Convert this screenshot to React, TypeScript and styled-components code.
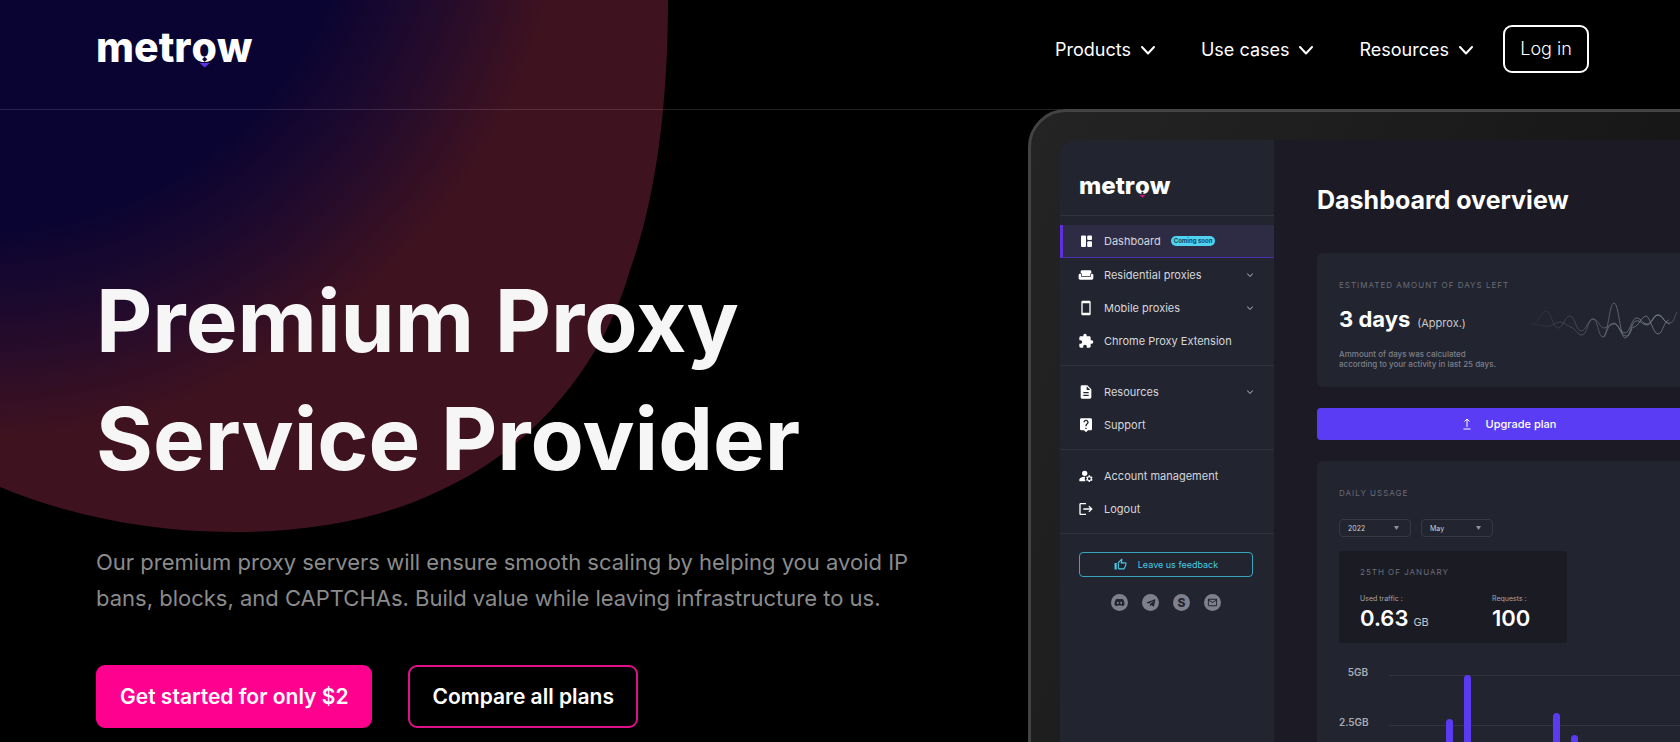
import React from "react";
import styled, { createGlobalStyle } from "styled-components";
import {
  MdWeekend,
  MdSmartphone,
  MdExtension,
  MdDescription,
  MdLiveHelp,
  MdManageAccounts,
  MdLogout,
  MdOutlineThumbUp,
  MdMailOutline,
} from "react-icons/md";
import { FaDiscord, FaTelegramPlane } from "react-icons/fa";

const GlobalStyle = createGlobalStyle`
  *, *::before, *::after { box-sizing: border-box; }
  body {
    margin: 0;
    background: #000;
    color: #fff;
    font-family: Inter, "Liberation Sans", sans-serif;
  }
  button, select { font-family: inherit; color: inherit; margin: 0; cursor: pointer; }
  a { color: inherit; text-decoration: none; }
  h1, h2, p, ul { margin: 0; padding: 0; }
  ul { list-style: none; }
`;

const Page = styled.div`
  position: relative;
  display: flex;
  flex-direction: column;
  height: 100vh;
  min-height: 740px;
  overflow: hidden;
`;

const Backdrop = styled.svg`
  position: absolute;
  top: 0;
  left: 0;
`;

const Header = styled.header`
  position: relative;
  display: flex;
  align-items: center;
  justify-content: space-between;
  height: 110px;
  padding: 0 91px 12px 96px;
  border-bottom: 1px solid rgba(255, 255, 255, 0.13);
`;

const Nav = styled.nav`
  display: flex;
  align-items: center;
  gap: 46px;
`;

const NavButton = styled.button`
  display: flex;
  align-items: center;
  gap: 10px;
  padding: 2px 0 0;
  border: 0;
  background: none;
  font-size: 18px;
  line-height: 24px;
`;

const LoginButton = styled.a`
  display: flex;
  align-items: center;
  justify-content: center;
  width: 86px;
  height: 48px;
  margin-left: -16px;
  border: 2px solid #fff;
  border-radius: 9px;
  font-size: 18px;
  font-weight: 300;
`;

const LogoText = styled.a<{ $size: number }>`
  display: inline-flex;
  padding-bottom: 3px;
  font-size: ${(p) => p.$size}px;
  line-height: 1;
  font-weight: 800;
`;

const LogoPin = styled.span`
  position: relative;

  svg {
    position: absolute;
    left: 0;
    bottom: 0;
    width: 100%;
    height: 100%;
    overflow: visible;
  }
`;

const Hero = styled.main`
  position: relative;
  flex: 1;
  display: grid;
  grid-template-columns: minmax(0, 1028fr) minmax(0, 652fr);
  min-height: 0;
`;

const Copy = styled.section`
  padding: 152px 0 0 96px;
`;

const Title = styled.h1`
  font-size: 87px;
  line-height: 118px;
  font-weight: 700;
  color: #f6f6f6;
`;

const Lead = styled.p`
  margin-top: 46px;
  font-size: 22px;
  line-height: 36px;
  color: #8b8b8b;
`;

const Actions = styled.div`
  display: flex;
  gap: 36px;
  margin-top: 49px;
`;

const ActionLink = styled.a<{ $filled?: boolean }>`
  display: flex;
  align-items: center;
  height: 63px;
  padding: 0 22px;
  border: 2px solid ${(p) => (p.$filled ? "#ff008f" : "#e0108a")};
  border-radius: 9px;
  background: ${(p) => (p.$filled ? "#ff008f" : "transparent")};
  font-size: 21px;
  font-weight: 600;
`;

const Device = styled.section`
  display: flex;
  width: 740px;
  height: 900px;
  margin-top: -1px;
  padding: 28px 28px 0 29px;
  border: 3px solid #434343;
  border-radius: 38px;
  background: linear-gradient(115deg, #242424, #161616 60%);
`;

const Sidebar = styled.aside`
  flex: 0 0 214px;
  border-top-left-radius: 14px;
  background: #22242f;
`;

const SideBrand = styled.div`
  display: flex;
  align-items: center;
  height: 75px;
  padding: 20px 0 0 19px;
`;

const MenuGroup = styled.ul`
  padding: 9px 0 8px;
  border-top: 1px solid #2f323d;
`;

const MenuLink = styled.a<{ $active?: boolean }>`
  display: flex;
  align-items: center;
  height: 33px;
  padding: 0 21px 0 ${(p) => (p.$active ? 15 : 18)}px;
  border-left: ${(p) => (p.$active ? "3px solid #5f2fe0" : "0")};
  border-bottom: ${(p) => (p.$active ? "1px solid #4a30b0" : "0")};
  background: ${(p) => (p.$active ? "#2e2c45" : "transparent")};
  font-size: 11px;
  color: #d6d7dc;

  > svg:first-child {
    flex: none;
    margin-right: 10px;
    color: #fff;
  }
`;

const Grow = styled.span`
  flex: 1;
`;

const Badge = styled.span`
  margin-left: 10px;
  padding: 0 3px;
  border-radius: 5px;
  background: #4fd2f0;
  color: #14485c;
  font-size: 6px;
  line-height: 10px;
  font-weight: 700;
`;

const SideFooter = styled.div`
  padding: 18px 21px 0 19px;
  border-top: 1px solid #2f323d;
`;

const FeedbackButton = styled.button`
  display: flex;
  align-items: center;
  justify-content: center;
  gap: 11px;
  width: 100%;
  height: 25px;
  padding: 0;
  border: 1px solid #37a5bd;
  border-radius: 4px;
  background: none;
  color: #48cbe4;
  font-size: 9px;
`;

const Socials = styled.div`
  display: flex;
  justify-content: center;
  gap: 14px;
  margin-top: 17px;
`;

const SocialLink = styled.a`
  display: flex;
  align-items: center;
  justify-content: center;
  width: 17px;
  height: 17px;
  border-radius: 50%;
  background: #7e818d;
  color: #22242f;
  font-size: 12px;
  font-weight: 800;
`;

const Board = styled.div`
  flex: 1;
  display: flex;
  flex-direction: column;
  padding: 43px 40px 0 43px;
  background: #1c1b25;
`;

const BoardTitle = styled.h2`
  font-size: 25px;
  line-height: 34px;
  font-weight: 700;
`;

const Card = styled.section`
  padding: 22px;
  border-radius: 6px;
  background: #22242f;
`;

const EstimateCard = styled(Card)`
  display: flex;
  justify-content: space-between;
  height: 134px;
  margin-top: 36px;
  padding: 26px 0 0 22px;
`;

const UsageCard = styled(Card)`
  flex: 1;
  margin-top: 21px;
  padding: 26px 22px 0;
`;

const Caption = styled.p`
  font-size: 8px;
  line-height: 12px;
  letter-spacing: 1px;
  color: #6a6d78;
  white-space: nowrap;
`;

const Figure = styled.p`
  display: flex;
  align-items: baseline;
  gap: 7px;
  font-size: 22px;
  line-height: 26px;
  font-weight: 700;
`;

const DaysFigure = styled(Figure)`
  margin-top: 15px;
`;

const StatFigure = styled(Figure)`
  margin-top: 1px;
  gap: 5px;
  font-weight: 600;
`;

const Unit = styled.span`
  font-size: 11px;
  font-weight: 400;
  color: #c8c9cf;
`;

const Note = styled.p`
  margin-top: 13px;
  font-size: 8px;
  line-height: 10px;
  font-weight: 500;
  color: #7d808b;
  white-space: nowrap;
`;

const Wave = styled.svg`
  flex: none;
  margin: 17px 0 0;
`;

const UpgradeButton = styled.button`
  display: flex;
  align-items: center;
  justify-content: center;
  gap: 15px;
  flex: none;
  height: 32px;
  margin-top: 21px;
  padding: 0;
  border: 0;
  border-radius: 4px;
  background: #5b3cf5;
  font-size: 11px;
  font-weight: 500;
`;

const Filters = styled.div`
  display: flex;
  gap: 10px;
  margin-top: 20px;
`;

const FilterBox = styled.label`
  position: relative;
  display: flex;
  width: 72px;

  svg {
    position: absolute;
    right: 12px;
    top: 7px;
    pointer-events: none;
  }
`;

const Select = styled.select`
  appearance: none;
  width: 100%;
  height: 18px;
  padding: 0 8px;
  border: 1px solid #363944;
  border-radius: 4px;
  background: transparent;
  color: #d0d1d6;
  font-size: 7px;
`;

const DayPanel = styled.div`
  display: grid;
  grid-template-columns: 132px 1fr;
  align-content: start;
  row-gap: 16px;
  width: 228px;
  height: 92px;
  margin-top: 14px;
  padding: 15px 21px 0;
  border-radius: 3px;
  background: #1b1b24;
`;

const PanelCaption = styled(Caption)`
  grid-column: 1 / -1;
`;

const StatLabel = styled.p`
  font-size: 7px;
  line-height: 10px;
  color: #a3a5ae;
`;

const Chart = styled.div`
  display: flex;
  gap: 21px;
  margin-top: 21px;
`;

const Axis = styled.div`
  display: flex;
  flex-direction: column;
  gap: 34px;
  width: 29px;
  font-size: 10px;
  line-height: 16px;
  font-weight: 600;
  text-align: right;
  color: #a9abb3;
`;

function Chevron({ size, stroke }: { size: number; stroke: number }) {
  return (
    <svg width={size} height={size} viewBox="0 0 14 14" fill="none" stroke="currentColor" strokeWidth={stroke} strokeLinecap="round" strokeLinejoin="round" aria-hidden="true">
      <path d="M1 4l6 6.500L13 4" />
    </svg>
  );
}

function Logo({ size, ground, accent }: { size: number; ground: string; accent: string }) {
  return (
    <LogoText href="#" $size={size}>
      metr
      <LogoPin>
        o
        <svg viewBox="0 0 25 40" preserveAspectRatio="xMidYMax meet" aria-hidden="true">
          <path d="M12.500 29l2.500 2.500-2.500 2.500-2.500-2.500z" fill={ground} />
          <path d="M7.500 35h10l-5 4.500z" fill={accent} />
        </svg>
      </LogoPin>
      w
    </LogoText>
  );
}

function DashboardIcon() {
  return (
    <svg width="16" height="16" viewBox="0 0 16 16" fill="currentColor" aria-hidden="true">
      <rect x="3" y="2.500" width="5" height="11.500" rx="1" />
      <rect x="9.200" y="2.500" width="4.800" height="4.500" rx="1" />
      <rect x="9.200" y="8.300" width="4.800" height="5.700" rx="1" />
    </svg>
  );
}

function UploadIcon() {
  return (
    <svg width="8" height="12" viewBox="0 0 8 12" fill="none" stroke="currentColor" strokeWidth="1" aria-hidden="true">
      <path d="M4 9V1M1.500 3.500L4 1l2.500 2.500M0.500 11h7" />
    </svg>
  );
}

type Item = { label: string; icon: React.ReactNode; expandable?: boolean; active?: boolean; badge?: string };

const menu: Item[][] = [
  [
    { label: "Dashboard", icon: <DashboardIcon />, active: true, badge: "Coming soon" },
    { label: "Residential proxies", icon: <MdWeekend size={16} />, expandable: true },
    { label: "Mobile proxies", icon: <MdSmartphone size={16} />, expandable: true },
    { label: "Chrome Proxy Extension", icon: <MdExtension size={16} /> },
  ],
  [
    { label: "Resources", icon: <MdDescription size={16} />, expandable: true },
    { label: "Support", icon: <MdLiveHelp size={16} /> },
  ],
  [
    { label: "Account management", icon: <MdManageAccounts size={16} /> },
    { label: "Logout", icon: <MdLogout size={16} /> },
  ],
];

const bars = [
  { x: 57, top: 50 },
  { x: 75, top: 6 },
  { x: 164, top: 44 },
  { x: 182, top: 66 },
];

function Filter({ name, options }: { name: string; options: string[] }) {
  return (
    <FilterBox>
      <Select aria-label={name}>
        {options.map((o) => (
          <option key={o}>{o}</option>
        ))}
      </Select>
      <svg width="5" height="4" viewBox="0 0 5 4" aria-hidden="true">
        <path d="M0 0h5L2.500 4z" fill="#8f929c" />
      </svg>
    </FilterBox>
  );
}

export default function App() {
  return (
    <>
      <GlobalStyle />
      <Page>
        <Backdrop width="680" height="540" viewBox="0 0 680 540" aria-hidden="true">
          <defs>
            <radialGradient id="glow" gradientUnits="userSpaceOnUse" cx="-20" cy="-150" r="590">
              <stop offset="0.640" stopColor="#0a0432" />
              <stop offset="0.820" stopColor="#230b2c" />
              <stop offset="1" stopColor="#3f121f" />
            </radialGradient>
          </defs>
          <path
            fill="url(#glow)"
            d="M0 0H668C668 100 657 195 630 270C606 355 541 445 441 490C378 521 306 532 234 532C150 532 70 516 0 487Z"
          />
        </Backdrop>

        <Header>
          <Logo size={41} ground="#0a0432" accent="#5f2fe6" />
          <Nav>
            {["Products", "Use cases", "Resources"].map((label) => (
              <NavButton key={label} type="button">
                {label}
                <Chevron size={14} stroke={2} />
              </NavButton>
            ))}
            <LoginButton href="#">Log in</LoginButton>
          </Nav>
        </Header>

        <Hero>
          <Copy>
            <Title>
              Premium Proxy
              <br />
              Service Provider
            </Title>
            <Lead>
              Our premium proxy servers will ensure smooth scaling by helping you avoid IP
              <br />
              bans, blocks, and CAPTCHAs. Build value while leaving infrastructure to us.
            </Lead>
            <Actions>
              <ActionLink href="#" $filled>
                Get started for only $2
              </ActionLink>
              <ActionLink href="#">Compare all plans</ActionLink>
            </Actions>
          </Copy>

          <Device>
            <Sidebar>
              <SideBrand>
                <Logo size={24} ground="#22242f" accent="#d6127f" />
              </SideBrand>
              {menu.map((group, i) => (
                <MenuGroup key={i}>
                  {group.map((item) => (
                    <li key={item.label}>
                      <MenuLink href="#" $active={item.active}>
                        {item.icon}
                        {item.label}
                        {item.badge && <Badge>{item.badge}</Badge>}
                        <Grow />
                        {item.expandable && <Chevron size={6} stroke={2} />}
                      </MenuLink>
                    </li>
                  ))}
                </MenuGroup>
              ))}
              <SideFooter>
                <FeedbackButton type="button">
                  <MdOutlineThumbUp size={13} />
                  Leave us feedback
                </FeedbackButton>
                <Socials>
                  <SocialLink href="#" aria-label="Discord">
                    <FaDiscord size={11} />
                  </SocialLink>
                  <SocialLink href="#" aria-label="Telegram">
                    <FaTelegramPlane size={10} />
                  </SocialLink>
                  <SocialLink href="#" aria-label="Skype">
                    S
                  </SocialLink>
                  <SocialLink href="#" aria-label="Email">
                    <MdMailOutline size={11} />
                  </SocialLink>
                </Socials>
              </SideFooter>
            </Sidebar>

            <Board>
              <BoardTitle>Dashboard overview</BoardTitle>
              <EstimateCard>
                <div>
                  <Caption>ESTIMATED AMOUNT OF DAYS LEFT</Caption>
                  <DaysFigure>
                    3 days <Unit>(Approx.)</Unit>
                  </DaysFigure>
                  <Note>
                    Ammount of days was calculated
                    <br />
                    according to your activity in last 25 days.
                  </Note>
                </div>
                <Wave width="172" height="50" viewBox="0 0 172 50" fill="none" aria-hidden="true">
                  <defs>
                    <linearGradient id="fade" gradientUnits="userSpaceOnUse" x1="0" y1="0" x2="172" y2="0">
                      <stop offset="0" stopColor="#8a8f9d" stopOpacity="0.050" />
                      <stop offset="0.550" stopColor="#8a8f9d" stopOpacity="0.600" />
                      <stop offset="0.750" stopColor="#8a8f9d" stopOpacity="0.700" />
                      <stop offset="0.900" stopColor="#8a8f9d" stopOpacity="0.200" />
                    </linearGradient>
                  </defs>
                  <g stroke="url(#fade)" strokeWidth="1">
                    <path d="M2 28C9 28 11 15 16 15S23 32 28 32S35 20 40 20S46 35 51 35S58 23 63 23S68 41 73 41S79 7 84 7S90 42 95 42S101 26 106 25S112 29 117 29S122 19 128 19S133 27 139 27S144 20 147 16" />
                    <path d="M2 28C11 29 16 31 20 30S26 26 30 26S37 30 41 31S47 39 52 39S58 23 63 23S70 32 74 32S80 27 84 27S90 37 95 37S102 21 107 22S112 28 117 28S124 19 128 19S135 28 140 28" />
                    <path d="M74 41C79 30 79 29 84 28S90 40 96 40S100 31 104 31S112 20 116 20S123 38 128 38S134 24 139 24" />
                  </g>
                </Wave>
              </EstimateCard>
              <UpgradeButton type="button">
                <UploadIcon />
                Upgrade plan
              </UpgradeButton>
              <UsageCard>
                <Caption>DAILY USSAGE</Caption>
                <Filters>
                  <Filter name="Year" options={["2022", "2021"]} />
                  <Filter name="Month" options={["May", "June"]} />
                </Filters>
                <DayPanel>
                  <PanelCaption>25TH OF JANUARY</PanelCaption>
                  <div>
                    <StatLabel>Used traffic :</StatLabel>
                    <StatFigure>
                      0.63 <Unit>GB</Unit>
                    </StatFigure>
                  </div>
                  <div>
                    <StatLabel>Requests :</StatLabel>
                    <StatFigure>100</StatFigure>
                  </div>
                </DayPanel>
                <Chart>
                  <Axis>
                    <span>5GB</span>
                    <span>2.5GB</span>
                  </Axis>
                  <svg width="291" height="110" viewBox="0 0 291 110" role="img" aria-label="Daily traffic">
                    <path d="M0 11.500H291M0 61.500H291" stroke="#32353f" />
                    {bars.map((b) => (
                      <rect key={b.x} x={b.x} y={b.top + 5} width="7" height="120" rx="3.500" fill="#5b3af2" />
                    ))}
                  </svg>
                </Chart>
              </UsageCard>
            </Board>
          </Device>
        </Hero>
      </Page>
    </>
  );
}
